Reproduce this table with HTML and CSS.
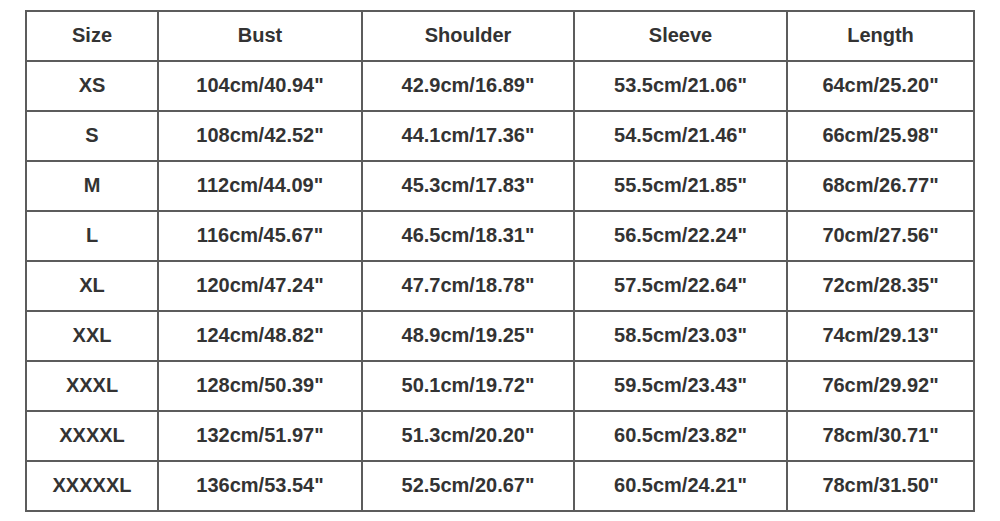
FILE: index.html
```html
<!DOCTYPE html>
<html>
<head>
<meta charset="utf-8">
<link rel="stylesheet" href="styles.css">
</head>
<body>
<table class="size-table">
  <colgroup>
    <col class="c1"><col class="c2"><col class="c3"><col class="c4"><col class="c5">
  </colgroup>
  <tr><td>Size</td><td>Bust</td><td>Shoulder</td><td>Sleeve</td><td>Length</td></tr>
  <tr><td>XS</td><td>104cm/40.94"</td><td>42.9cm/16.89"</td><td>53.5cm/21.06"</td><td>64cm/25.20"</td></tr>
  <tr><td>S</td><td>108cm/42.52"</td><td>44.1cm/17.36"</td><td>54.5cm/21.46"</td><td>66cm/25.98"</td></tr>
  <tr><td>M</td><td>112cm/44.09"</td><td>45.3cm/17.83"</td><td>55.5cm/21.85"</td><td>68cm/26.77"</td></tr>
  <tr><td>L</td><td>116cm/45.67"</td><td>46.5cm/18.31"</td><td>56.5cm/22.24"</td><td>70cm/27.56"</td></tr>
  <tr><td>XL</td><td>120cm/47.24"</td><td>47.7cm/18.78"</td><td>57.5cm/22.64"</td><td>72cm/28.35"</td></tr>
  <tr><td>XXL</td><td>124cm/48.82"</td><td>48.9cm/19.25"</td><td>58.5cm/23.03"</td><td>74cm/29.13"</td></tr>
  <tr><td>XXXL</td><td>128cm/50.39"</td><td>50.1cm/19.72"</td><td>59.5cm/23.43"</td><td>76cm/29.92"</td></tr>
  <tr><td>XXXXL</td><td>132cm/51.97"</td><td>51.3cm/20.20"</td><td>60.5cm/23.82"</td><td>78cm/30.71"</td></tr>
  <tr><td>XXXXXL</td><td>136cm/53.54"</td><td>52.5cm/20.67"</td><td>60.5cm/24.21"</td><td>78cm/31.50"</td></tr>
</table>
</body>
</html>
```
FILE: styles.css
```css
html, body {
  margin: 0;
  padding: 0;
  background: #ffffff;
}
body {
  padding: 10px 0 0 25px;
  font-family: "Liberation Sans", Arial, sans-serif;
}
.size-table {
  border-collapse: collapse;
  table-layout: fixed;
  width: 948px;
}
.size-table td {
  border: 2px solid #5c5c5c;
  height: 46px;
  padding: 0 0 2px 0;
  text-align: center;
  vertical-align: middle;
  font-size: 20px;
  font-weight: bold;
  color: #333333;
}
.c1 { width: 132px; }
.c2 { width: 204px; }
.c3 { width: 212px; }
.c4 { width: 213px; }
.c5 { width: 187px; }
```
